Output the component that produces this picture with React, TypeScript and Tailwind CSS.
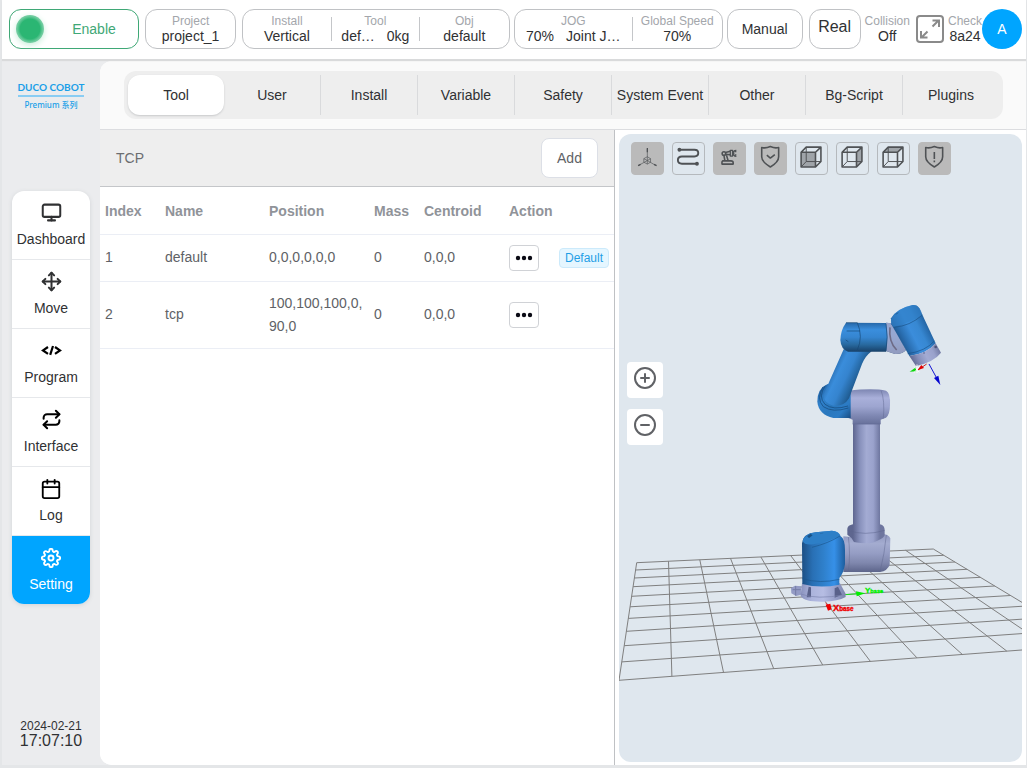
import type { ReactNode } from "react";
import { CircleMinus, CirclePlus, Monitor, Move, Repeat } from "lucide-react";
import { FiCalendar, FiSettings } from "react-icons/fi";

const tabs = ["Tool", "User", "Install", "Variable", "Safety", "System Event", "Other", "Bg-Script", "Plugins"];

function Labelled({ label, children }: { label: string; children: ReactNode }) {
  return (
    <div className="flex flex-col items-center justify-center whitespace-nowrap text-center">
      <div className="text-xs leading-[15px] text-[#a3a6ab]">{label}</div>
      <div className="text-sm leading-[15px] text-[#303133]">{children}</div>
    </div>
  );
}

function Header() {
  return (
    <header className="z-10 flex h-[59px] shrink-0 items-center gap-1 bg-white pb-px pl-[7px] pr-1 shadow-[0_2px_1px_#d9dadb]">
      <button className="mr-0.5 flex h-10 w-[130px] shrink-0 items-center rounded-xl border border-[#3fa876] pl-1.5 text-sm text-[#3fa876]">
        <span className="size-7 rounded-full bg-[radial-gradient(circle,#2bb673_0_50%,#6ccb9d_65%,#a5dcc0_100%)] shadow-[0_2px_6px_#c5eed9]" />
        <span className="grow pl-1.5 text-center">Enable</span>
      </button>
      <div className="mr-0.5 grid h-10 min-w-0 flex-[90] rounded-xl border border-[#c0c2c5]">
        <Labelled label="Project">project_1</Labelled>
      </div>
      <div className="grid h-10 min-w-0 flex-[268] grid-cols-3 items-center divide-x divide-[#c4c6c9] rounded-xl border border-[#c0c2c5] [&>*]:h-6">
        <Labelled label="Install">Vertical</Labelled>
        <Labelled label="Tool">
          <span className="mr-3">def…</span>
          <span>0kg</span>
        </Labelled>
        <Labelled label="Obj">default</Labelled>
      </div>
      <div className="grid h-10 min-w-0 flex-[209] grid-cols-[4fr_3fr] items-center divide-x divide-[#c4c6c9] rounded-xl border border-[#c0c2c5] [&>*]:h-6">
        <Labelled label="JOG">
          <span className="mr-3">70%</span>
          <span>Joint J…</span>
        </Labelled>
        <Labelled label="Global Speed">70%</Labelled>
      </div>
      <button className="mr-0.5 h-10 w-[76px] shrink-0 rounded-xl border border-[#c0c2c5] text-sm text-[#303133]">Manual</button>
      <button className="h-10 w-[52px] shrink-0 rounded-xl border border-[#c0c2c5] pb-1 text-base text-[#303133]">Real</button>
      <Labelled label="Collision">Off</Labelled>
      <button aria-label="Full screen" className="ml-0.5 shrink-0">
        <svg className="size-7" viewBox="0 0 28 28" fill="none" stroke="#8a8a8a" strokeWidth="2">
          <rect x="1" y="1" width="26" height="26" rx="3" />
          <path d="M16.500 11.500 22.500 5.500M16.500 5.500h6.500v6.500M11.500 16.500 5.500 22.500M5 16v6.500h6.500" />
        </svg>
      </button>
      <Labelled label="Check">8a24</Labelled>
      <button className="-ml-1 size-10 shrink-0 rounded-full bg-[#00a5ff] text-sm text-white">A</button>
    </header>
  );
}

function CodeIcon() {
  return (
    <svg width="21" height="21" viewBox="0 0 21 21" fill="none" stroke="#000" strokeWidth="2.200">
      <path d="M7 7 2 10.400l5 3.400M14 7l5 3.400-5 3.400M12 6 9.200 14.800" />
    </svg>
  );
}

const nav: { label: string; icon: ReactNode }[] = [
  { label: "Dashboard", icon: <Monitor size={21} color="#303133" strokeWidth={2.3} /> },
  { label: "Move", icon: <Move size={21} color="#303133" strokeWidth={2.3} /> },
  { label: "Program", icon: <CodeIcon /> },
  { label: "Interface", icon: <Repeat size={21} color="#000" strokeWidth={2.3} /> },
  { label: "Log", icon: <FiCalendar size={22} color="#000" /> },
  { label: "Setting", icon: <FiSettings size={20} color="#fff" strokeWidth={2.3} /> },
];

function Sidebar() {
  return (
    <aside className="flex w-[98px] shrink-0 flex-col items-center pb-4 pt-[18px]">
      <div className="flex w-[66px] flex-col items-center whitespace-nowrap text-[#1a9fe8]">
        <div className="font-[Lato,sans-serif] text-[10px] font-bold leading-4">DUCO COBOT</div>
        <div className="h-0.5 w-full bg-[#8acdf3]" />
        <div className="font-['Noto_Sans','Noto_Sans_CJK_SC',sans-serif] text-[8px] font-medium leading-4">Premium 系列</div>
      </div>
      <nav className="mt-[78px] flex w-[78px] flex-col overflow-hidden rounded-xl bg-white shadow-[0_1px_4px_#d0d3d6]">
        {nav.map((item) => {
          const active = item.label === "Setting";
          return (
            <a
              key={item.label}
              href={"#" + item.label.toLowerCase()}
              className={
                "flex flex-col items-center gap-1.5 pt-[11px] text-sm leading-5 " +
                (active ? "h-[68px] bg-[#00a5ff] text-white" : "h-[69px] border-b border-[#e6e8eb] text-[#303133]")
              }
            >
              <span className="flex h-[21px] items-center">{item.icon}</span>
              {item.label}
            </a>
          );
        })}
      </nav>
      <div className="mt-auto text-center text-[#303133]">
        <div className="text-xs leading-[14px]">2024-02-21</div>
        <div className="text-base leading-4">17:07:10</div>
      </div>
    </aside>
  );
}

function Tabs() {
  return (
    <div className="flex h-[69px] shrink-0 items-center border-b border-[#dcdde0] bg-[#fafafa] pl-6 pr-[23px]">
      <div role="tablist" className="flex h-12 w-full rounded-xl bg-[#eeeeee] p-1">
        {tabs.map((tab, i) => (
          <div key={tab} className={"min-w-0 flex-1 " + (i > 1 ? "border-l border-[#d9dadc]" : "")}>
            <button
              role="tab"
              aria-selected={i === 0}
              className={
                "h-10 w-full whitespace-nowrap rounded-xl text-sm text-[#303133] " +
                (i === 0 ? "bg-white shadow-[0_1px_2px_#c8c9cb]" : "")
              }
            >
              {tab}
            </button>
          </div>
        ))}
      </div>
    </div>
  );
}

const rows = [
  { index: 1, name: "default", position: "0,0,0,0,0,0", mass: "0", centroid: "0,0,0", isDefault: true },
  { index: 2, name: "tcp", position: "100,100,100,0,90,0", mass: "0", centroid: "0,0,0", isDefault: false },
];

function TcpPanel() {
  return (
    <section className="min-w-0 flex-[514] border-r border-[#bfc1c4] bg-white">
      <div className="flex h-[57px] items-center justify-between border-b border-[#c4c6c9] bg-[#eeeeee] px-4">
        <h2 className="text-sm text-[#6b6d70]">TCP</h2>
        <button className="h-10 w-[57px] rounded-lg border border-[#dcdfe6] bg-white text-sm text-[#606266]">Add</button>
      </div>
      <table className="w-full table-fixed text-left text-sm leading-[23px] text-[#606266]">
        <thead className="text-[#909399]">
          <tr className="h-[47px] border-b border-[#ebeef5]">
            <th className="w-[60px] px-[5px] pt-0.5 font-bold">Index</th>
            <th className="px-[5px] pt-0.5 font-bold">Name</th>
            <th className="w-[105px] px-[5px] pt-0.5 font-bold">Position</th>
            <th className="w-[50px] whitespace-nowrap px-[5px] pt-0.5 font-bold">Mass</th>
            <th className="w-[85px] px-[5px] pt-0.5 font-bold">Centroid</th>
            <th className="w-[50px] whitespace-nowrap px-[5px] pt-0.5 font-bold">Action</th>
            <th className="w-[60px]" />
          </tr>
        </thead>
        <tbody>
          {rows.map((r) => (
            <tr key={r.index} className="border-b border-[#ebeef5]">
              <td className="px-[5px] py-2.5">{r.index}</td>
              <td className="px-[5px] py-2.5">{r.name}</td>
              <td className="break-all py-2.5 pl-[5px]">{r.position}</td>
              <td className="px-[5px] py-2.5">{r.mass}</td>
              <td className="px-[5px] py-2.5">{r.centroid}</td>
              <td className="px-[5px] py-2.5">
                <button aria-label="More actions" className="flex h-[26px] w-[30px] items-center justify-center rounded border border-[#d0d2d6] bg-white">
                  <svg width="18" height="6" viewBox="0 0 18 6" fill="#0a0a14">
                    <circle cx="3" cy="3" r="2.200" />
                    <circle cx="9" cy="3" r="2.200" />
                    <circle cx="15" cy="3" r="2.200" />
                  </svg>
                </button>
              </td>
              <td className="px-[5px]">
                {r.isDefault && (
                  <span className="flex h-5 w-[50px] items-center justify-center rounded border border-[#cceafb] bg-[#e5f6ff] text-xs text-[#1f9fe6]">
                    Default
                  </span>
                )}
              </td>
            </tr>
          ))}
        </tbody>
      </table>
    </section>
  );
}

const shield = "M22 15c10 3 18 1 27-3 9 4 17 6 26 3v29c0 15-14 25-26 32-12-7-27-17-27-32z";

function Cube({ face }: { face: string }) {
  return (
    <>
      <path d={face} fill="#9fa4a9" stroke="none" />
      <path d="M17 30 33 14H79V59L62 76H17ZM17 30H62V76M62 30 79 14" strokeWidth="5" />
      <path d="M33 14V59H79M33 59 17 76" strokeWidth="3" />
    </>
  );
}

const tools: { label: string; active: boolean; drawing: ReactNode }[] = [
  {
    label: "Coordinate axes",
    active: true,
    drawing: (
      <g strokeWidth="2">
        <path d="M49 56V20M49 56 22 71M49 56 75 71" />
        <path d="M49 17v13M20 72l8-4M70 68l8 4" strokeWidth="4" />
        <path d="M49 44l10 6v11l-10 6-11-6V50zM38 50l11 6 10-6M49 56v11" />
      </g>
    ),
  },
  {
    label: "Trajectory",
    active: false,
    drawing: (
      <>
        <path d="M21 22H68c16 0 16 21 0 21H29c-17 0-17 23 0 23H76" strokeWidth="6" />
        <circle cx="21" cy="22" r="6" fill="#4f5255" stroke="none" />
        <circle cx="76" cy="66" r="6" fill="#4f5255" stroke="none" />
      </>
    ),
  },
  {
    label: "Robot model",
    active: true,
    drawing: (
      <g strokeWidth="5">
        <circle cx="32" cy="34" r="5.500" />
        <path d="M37 31 52 27M37 36l15 2M32 40l3 16M40 39l5 17M28 57h26c4 0 7 3 7 6v4H26v-7z" />
        <path d="M52 24h7v18h-7zM59 33h5M71 24c-9 0-10 6-8 9-2 5 0 10 8 10M66 28h5M66 38h5" strokeWidth="4" />
      </g>
    ),
  },
  { label: "Safety enabled", active: true, drawing: <path d={shield + "M38 39l11 9 14-11"} strokeWidth="5" /> },
  { label: "Front view", active: false, drawing: <Cube face="M17 30H62V76H17Z" /> },
  { label: "Right view", active: false, drawing: <Cube face="M62 30 79 14V59L62 76Z" /> },
  { label: "Top view", active: false, drawing: <Cube face="M17 30 33 14H79L62 30Z" /> },
  { label: "Safety warning", active: true, drawing: <path d={shield + "M49 29V51M49 56v5"} strokeWidth="5" /> },
];

// Perspective map from the unit square onto the floor's four corners.
const [x0, y0, x1, y1, x2, y2, x3, y3] = [636.7, 562.7, 933.3, 549, 1092.3, 644.7, 619, 680.3];
const dx1 = x1 - x2;
const dx2 = x3 - x2;
const sx = x0 - x1 + x2 - x3;
const dy1 = y1 - y2;
const dy2 = y3 - y2;
const sy = y0 - y1 + y2 - y3;
const det = dx1 * dy2 - dx2 * dy1;
const g = (sx * dy2 - dx2 * sy) / det;
const h = (dx1 * sy - sx * dy1) / det;
function floor(u: number, v: number) {
  const w = g * u + h * v + 1;
  const x = ((x1 - x0 + g * x1) * u + (x3 - x0 + h * x3) * v + x0) / w;
  const y = ((y1 - y0 + g * y1) * u + (y3 - y0 + h * y3) * v + y0) / w;
  return x.toFixed(1) + " " + y.toFixed(1);
}
const floorPath = Array.from({ length: 11 }, (_, i) => {
  const t = i / 10;
  return "M" + floor(t, 0) + "L" + floor(t, 1) + "M" + floor(0, t) + "L" + floor(1, t);
}).join("");

function Stops({ colors }: { colors: string[] }) {
  return colors.map((c, i) => <stop key={i} offset={i / (colors.length - 1)} stopColor={c} />);
}

const blues = ["#1b4d80", "#2a6fb2", "#3b8ddb", "#3788d2", "#2466a6"];
const greys = ["#5e668f", "#8790bb", "#a3abd3", "#9aa2cc", "#6e769f"];

function Scene() {
  return (
    <svg className="absolute inset-0 size-full" viewBox="619 134 403 628" preserveAspectRatio="xMidYMid slice" aria-label="Robot view">
      <defs>
        <linearGradient id="column" x1="219" x2="300" gradientUnits="userSpaceOnUse"><Stops colors={greys} /></linearGradient>
        <linearGradient id="shoulder" x1="0" x2="0" y1="732" y2="848" gradientUnits="userSpaceOnUse"><Stops colors={["#9098bf", "#a4acd0", "#959dc4", "#7f87ad", "#5a6288"]} /></linearGradient>
        <linearGradient id="elbow" x1="0" x2="0" y1="298" y2="402" gradientUnits="userSpaceOnUse"><Stops colors={["#7d86b2", "#a9b0da", "#9da5d0", "#8089b4", "#68719b"]} /></linearGradient>
        <linearGradient id="base" x1="66" x2="195" gradientUnits="userSpaceOnUse"><Stops colors={["#1c4f84", "#2970b5", "#2f80cb", "#3690e8", "#1d5e9e"]} /></linearGradient>
        <linearGradient id="foot" x1="62" x2="197" gradientUnits="userSpaceOnUse"><Stops colors={["#8991bd", "#acb4dc", "#b6bde3", "#9aa2cc", "#7c84ad"]} /></linearGradient>
        <linearGradient id="joint" x1="112" x2="212" y1="300" y2="384" gradientUnits="userSpaceOnUse"><Stops colors={["#2061a3", "#3081cb", "#2a78bd", "#2c7cc5", "#184d83"]} /></linearGradient>
        <linearGradient id="forearm" x1="150" y1="240" x2="245" y2="285" gradientUnits="userSpaceOnUse"><Stops colors={["#2567a8", "#3a8ddb", "#3584cf", "#24659f", "#153d66"]} /></linearGradient>
        <linearGradient id="wrist" x1="0" x2="0" y1="97" y2="186" gradientUnits="userSpaceOnUse"><Stops colors={["#2566a5", "#3a8edd", "#3585d0", "#28699f", "#173f66"]} /></linearGradient>
        <linearGradient id="hand" x1="348" y1="150" x2="440" y2="103" gradientUnits="userSpaceOnUse"><Stops colors={blues} /></linearGradient>
        <linearGradient id="flange" x1="395" y1="215" x2="480" y2="175" gradientUnits="userSpaceOnUse"><Stops colors={greys} /></linearGradient>
      </defs>
      <path d={floorPath} fill="none" stroke="#7f7f7f" strokeWidth="1" />
      <g transform="translate(780 290) scale(.33333)">
        <rect x="219" y="390" width="81" height="325" fill="url(#column)" />
        <path d="M190 739 215 741 300 732Q326 731 331 745L329 824Q323 842 300 846L190 846Z" fill="url(#shoulder)" />
        <path d="M319 735Q314 790 300 846M205 741Q212 790 205 846" fill="none" stroke="#626a90" strokeWidth="1.500" />
        <path d="M219 703C204 706 202 712 202 720V734Q216 742 222 756Q270 765 292 752Q312 744 314 736V720C314 712 310 705 300 703Z" fill="url(#column)" />
        <path d="M203 721Q255 739 314 721" fill="none" stroke="#5d668e" strokeWidth="1.500" />
        <path d="M33 894 45 887 64 889V914L48 918 34 910Z" fill="#939bc5" />
        <path d="M38 899h24M47 888v29" stroke="#747ca5" strokeWidth="3" />
        <path d="M66 880 62 918Q72 936 130 935 174 934 197 921L196 910 180 880Z" fill="url(#foot)" />
        <path d="M86 890 80 922 93 922V892ZM164 895V923L186 914 174 890Z" fill="#59618a" />
        <path d="M62 912Q110 930 196 914" fill="none" stroke="#7b84ad" strokeWidth="2" />
        <path d="M66 760Q70 730 106 727L156 722Q177 723 182 739 195 747 195 780V823Q191 850 178 864V884Q120 896 67 882Z" fill="url(#base)" />
        <path d="M68 753Q74 730 108 727L155 722Q176 724 180 738 145 755 104 762 74 768 68 753Z" fill="#2d7fc7" />
        <path d="M180 738Q145 760 96 772M67 866Q120 882 178 868" fill="none" stroke="#1b578e" strokeWidth="2" />
        <path d="M82 738l10-6 5 4-10 8zM120 731l10-2" fill="#195287" stroke="#195287" />

        <path d="M205 302Q280 294 318 302 332 309 330 345 330 373 318 383L302 389V403H218V389L203 383Z" fill="url(#elbow)" />
        <path d="M303 301Q315 330 310 386M218 402H301" fill="none" stroke="#626a91" strokeWidth="1.500" />
        <path d="M112 335Q112 295 143 282L212 305V384L160 384Q116 374 112 335Z" fill="url(#joint)" />
        <path d="M191 178 275 184Q256 198 246 222L207 325Q192 350 160 347 133 340 130 315Z" fill="url(#forearm)" />
        <path d="M136 287Q113 320 135 343 160 362 204 348M129 291Q108 326 130 350 158 369 205 354" fill="none" stroke="#184f84" strokeWidth="2.500" />
        <path d="M318 98 335 100 378 180Q367 193 345 192L318 183Z" fill="url(#wrist)" />
        <path d="M318 98 335 100 378 180Q367 193 345 192L318 183Z" fill="#a8add0" opacity=".85" />
        <path d="M330 112Q325 155 350 180" fill="none" stroke="#6d6b86" strokeWidth="5" />
        <path d="M198 98Q182 120 181 150 183 178 204 185L318 185Q326 140 318 99Z" fill="url(#wrist)" />
        <path d="M198 98H232Q250 140 232 180M200 123H240M197 150l8 5M318 101Q325 140 318 184" fill="none" stroke="#174774" strokeWidth="2" />
        <path d="M333 85Q350 55 398 45 412 44 418 55L467 160Q440 192 388 198L334 103Z" fill="url(#hand)" />
        <path d="M333 87Q350 55 398 45 412 44 418 55 427 65 424 78 380 100 342 111 331 105 333 87Z" fill="#3181ca" opacity=".65" />
        <path d="M342 112Q390 108 427 75M383 191Q436 184 463 153M347 73l8-5" fill="none" stroke="#1a5388" strokeWidth="2" />
        <path d="M388 198Q440 192 467 160L483 188Q462 216 408 228Z" fill="url(#flange)" />
        <circle cx="467" cy="171" r="4" fill="#4b5277" />
        <circle cx="432" cy="189" r="3" fill="#737ba4" />

        <path d="M447 222 470 264" stroke="#1414d2" strokeWidth="3" />
        <path d="M462 264 475 257 481 285Z" fill="#0505cf" />
        <path d="M440 222 414 240" stroke="#cf2020" strokeWidth="3" />
        <path d="M424 225 432 234 412 241Z" fill="#e00000" />
        <path d="M408 232 409 244 389 245Z" fill="#10d810" />
        <path d="M402 229l16 18M411 223v26M418 230l-16 18" stroke="#fff" strokeWidth="2.500" />

        <path d="M197 914 232 911" stroke="#00f000" strokeWidth="2.500" />
        <path d="M228 904 230 919 256 910Z" fill="#00f000" />
        <path d="M137 938 150 956" stroke="#f00000" strokeWidth="2" />
        <path d="M137 944 151 941 155 958 144 962Z" fill="#f00000" />
        <text x="159" y="962" fill="#f00000" stroke="#f00000" className="font-['Liberation_Sans',sans-serif] text-[28px] font-bold">
          X<tspan className="text-[19px]">base</tspan>
        </text>
        <text x="255" y="908" fill="#00f000" stroke="#00f000" className="font-['Liberation_Sans',sans-serif] text-[24px] font-bold">
          Y<tspan className="text-[17px]">base</tspan>
        </text>
      </g>
    </svg>
  );
}

function Viewer() {
  return (
    <section className="flex min-w-0 flex-[403] bg-white p-1 pb-[3px]">
      <div className="relative min-w-0 flex-1 overflow-hidden rounded-xl bg-[#dfe7ee] p-2">
        <Scene />
        <div className="relative ml-1 flex gap-2">
          {tools.map((t) => (
            <button
              key={t.label}
              aria-label={t.label}
              aria-pressed={t.active}
              className={"size-[33px] shrink-0 rounded border " + (t.active ? "border-[#bababa] bg-[#bababa]" : "border-[#b5b9bd]")}
            >
              <svg className="size-full" viewBox="1 1 97 97" fill="none" stroke="#4f5255" strokeLinejoin="round">
                {t.drawing}
              </svg>
            </button>
          ))}
        </div>
        <div className="relative mt-[187px] flex w-9 flex-col gap-[11px]">
          <button aria-label="Zoom in" className="flex size-9 justify-center rounded bg-white pt-1">
            <CirclePlus size={24} color="#606266" />
          </button>
          <button aria-label="Zoom out" className="flex size-9 justify-center rounded bg-white pt-1">
            <CircleMinus size={24} color="#606266" />
          </button>
        </div>
      </div>
    </section>
  );
}

export default function App() {
  return (
    <div className="flex h-screen flex-col border-b-[3px] border-l-2 border-r border-[#e4e6e8] bg-[#ebecee] font-['Liberation_Sans',Arial,sans-serif]">
      <Header />
      <div className="flex min-h-0 flex-1 pt-0.5">
        <Sidebar />
        <main className="flex min-w-0 flex-1 flex-col overflow-hidden rounded-l-xl bg-white">
          <Tabs />
          <div className="flex min-h-0 flex-1">
            <TcpPanel />
            <Viewer />
          </div>
        </main>
      </div>
    </div>
  );
}
